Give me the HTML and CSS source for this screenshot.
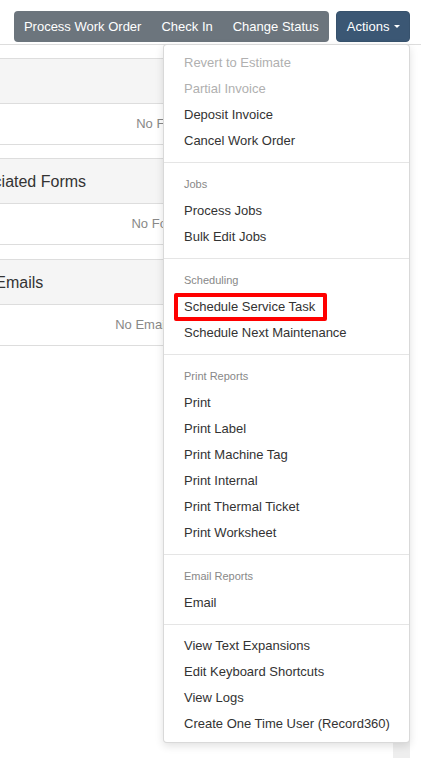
FILE: index.html
```html
<!DOCTYPE html>
<html lang="en">
<head>
    <meta charset="UTF-8">
    <meta name="viewport" content="width=device-width, initial-scale=1.0">
    <title>Work Order</title>
    <link rel="stylesheet" href="styles.css">
</head>
<body>
    <div class="toolbar">
        <div class="btn-group">
            <button class="btn">Process Work Order</button>
            <button class="btn">Check In</button>
            <button class="btn">Change Status</button>
        </div>
        <div class="actions">
            <button class="btn btn-actions">Actions <span class="caret"></span></button>
            <ul class="dropdown-menu">
                <li class="disabled"><a href="#">Revert to Estimate</a></li>
                <li class="disabled"><a href="#">Partial Invoice</a></li>
                <li><a href="#">Deposit Invoice</a></li>
                <li><a href="#">Cancel Work Order</a></li>
                <li class="divider"></li>
                <li class="dropdown-header">Jobs</li>
                <li><a href="#">Process Jobs</a></li>
                <li><a href="#">Bulk Edit Jobs</a></li>
                <li class="divider"></li>
                <li class="dropdown-header">Scheduling</li>
                <li class="highlight"><a href="#">Schedule Service Task</a></li>
                <li><a href="#">Schedule Next Maintenance</a></li>
                <li class="divider"></li>
                <li class="dropdown-header">Print Reports</li>
                <li><a href="#">Print</a></li>
                <li><a href="#">Print Label</a></li>
                <li><a href="#">Print Machine Tag</a></li>
                <li><a href="#">Print Internal</a></li>
                <li><a href="#">Print Thermal Ticket</a></li>
                <li><a href="#">Print Worksheet</a></li>
                <li class="divider"></li>
                <li class="dropdown-header">Email Reports</li>
                <li><a href="#">Email</a></li>
                <li class="divider"></li>
                <li><a href="#">View Text Expansions</a></li>
                <li><a href="#">Edit Keyboard Shortcuts</a></li>
                <li><a href="#">View Logs</a></li>
                <li><a href="#">Create One Time User (Record360)</a></li>
            </ul>
        </div>
    </div>
    <div class="rule"></div>

    <div class="page">
        <div class="panels">
            <div class="panel">
                <div class="panel-heading">Files</div>
                <div class="panel-body">No Files</div>
            </div>
            <div class="panel">
                <div class="panel-heading">Associated Forms</div>
                <div class="panel-body">No Forms</div>
            </div>
            <div class="panel">
                <div class="panel-heading">Sent Emails</div>
                <div class="panel-body">No Emails Sent</div>
            </div>
        </div>
        <div class="strip"></div>
    </div>
</body>
</html>
```

FILE: styles.css
```css
*, *::before, *::after {
    box-sizing: border-box;
}
html, body {
    height: 100%;
}
body {
    margin: 0;
    font-family: "Liberation Sans", Arial, sans-serif;
    font-size: 13px;
    color: #333;
    background: #fff;
    display: flex;
    flex-direction: column;
    overflow: hidden;
}
.toolbar {
    display: flex;
    justify-content: flex-end;
    gap: 7px;
    padding: 11px 11px 0 0;
    position: relative;
    z-index: 2;
}
.btn-group {
    display: flex;
    background-color: #6c757d;
    border-radius: 4px;
}
.btn {
    font-family: inherit;
    font-size: 13px;
    line-height: 19px;
    padding: 5px 9px;
    border: 1px solid transparent;
    background: none;
    color: #fff;
    cursor: pointer;
}
.btn-actions {
    padding: 5px 9px 5px 10px;
    background-color: #3b5774;
    border-color: #37526d;
    border-radius: 4px;
}
.caret {
    display: inline-block;
    vertical-align: middle;
    margin-left: 1px;
    margin-top: -2px;
    border-top: 3px solid #fff;
    border-left: 3px solid transparent;
    border-right: 3px solid transparent;
}
.actions {
    position: relative;
}
.dropdown-menu {
    position: absolute;
    top: 100%;
    right: 0;
    width: 247px;
    margin: 2px 0 0;
    padding: 5px 0;
    list-style: none;
    background: #fff;
    border: 1px solid rgba(0, 0, 0, 0.15);
    border-radius: 4px;
    box-shadow: 0 3px 8px rgba(0, 0, 0, 0.12);
}
.dropdown-menu a {
    display: block;
    padding: 3px 20px;
    line-height: 20px;
    color: #333;
    text-decoration: none;
    white-space: nowrap;
}
.dropdown-menu .disabled a {
    color: #b0b0b0;
}
.dropdown-menu .divider {
    height: 1px;
    margin: 8px 0;
    background-color: #e5e5e5;
}
.dropdown-header {
    padding: 3px 20px 4px;
    font-size: 11px;
    line-height: 20px;
    color: #888;
}
.highlight {
    position: relative;
}
.highlight::after {
    content: "";
    position: absolute;
    left: 10px;
    top: -1px;
    width: 153px;
    height: 28px;
    border: 4px solid #f00;
    border-radius: 2px;
}
.rule {
    margin: 2px 0 0;
    border-top: 1px solid #ddd;
}
.page {
    flex: 1;
    display: flex;
    padding-right: 11px;
}
.panels {
    flex: 1;
    margin-left: -60px;
}
.panel {
    margin-top: 13px;
}
.panel:last-child {
    margin-top: 14px;
}
.panel-heading {
    padding: 11px 18px 9px;
    font-size: 16px;
    line-height: 24px;
    background-color: #f5f5f5;
    border-top: 1px solid #ddd;
    border-bottom: 1px solid #ddd;
}
.panel-body {
    padding: 10px 13px 10px 0;
    line-height: 20px;
    text-align: center;
    color: #888;
    border-bottom: 1px solid #ddd;
}
.strip {
    width: 17px;
    margin-top: 13px;
    background-color: #eee;
}
```
